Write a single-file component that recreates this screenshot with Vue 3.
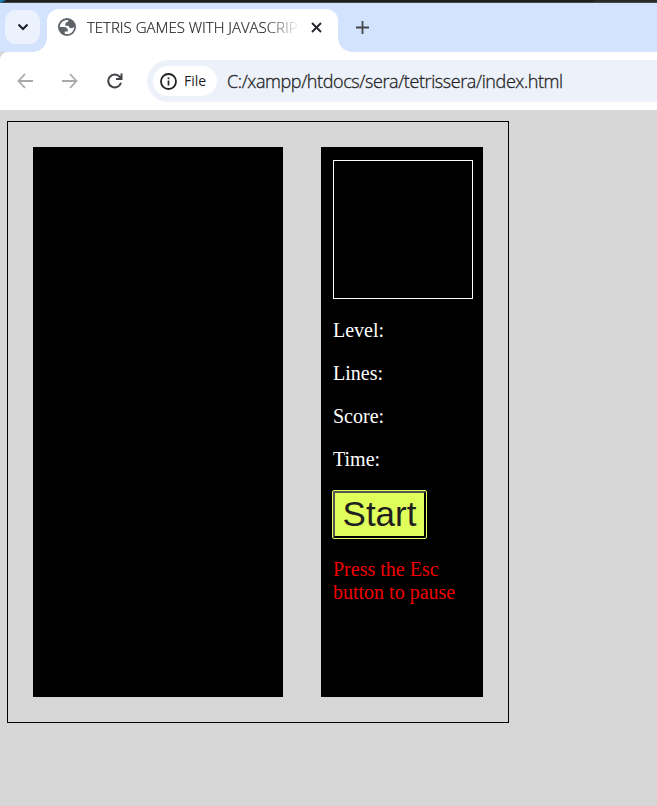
<script setup>
const stats = ['Level:', 'Lines:', 'Score:', 'Time:']
</script>

<template>
  <div class="window">
    <div class="desktop-edge"><svg width="657" height="3"><path d="M0 0h6L0 3z" fill="#187fb5" /><path d="M594 0h63v2h-64z" fill="#292929" /></svg></div>
    <header class="tabstrip">
      <button class="tab-search" aria-label="Search tabs">
        <svg width="12" height="8" viewBox="0 0 12 8"><path d="M1.500 1.500 6 6l4.500-4.500" fill="none" stroke="#1c1d20" stroke-width="2" /></svg>
      </button>
      <div class="tab">
        <svg class="globe" width="18" height="18" viewBox="2 2 20 20">
          <circle cx="12" cy="12" r="10" fill="#5f6368" />
          <path d="M4 12h4.400c3.407.022 4.922 1.730 4.543 5.127H9.488v2.470a8.004 8.004 0 0 0 10.498-8.080C19.327 12.672 18.333 13.250 17 13.250c-2.137 0-3.206-.916-3.206-2.750h-3.748c-.274-2.728.683-4.092 2.870-4.092 0-.975.327-1.597.811-1.970A8.004 8.004 0 0 0 4 12z" fill="#fff" />
        </svg>
        <span class="tab-title">TETRIS GAMES WITH JAVASCRIPT</span>
        <svg class="close" width="11" height="11" viewBox="0 0 11 11"><path d="m1 1 9 9m0-9-9 9" stroke="#25272b" stroke-width="1.900" /></svg>
      </div>
      <svg class="new-tab" width="13" height="13" viewBox="0 0 13 13"><path d="M6.500 0v13M0 6.500h13" stroke="#45474b" stroke-width="1.800" /></svg>
    </header>

    <nav class="toolbar">
      <svg class="back" width="16" height="16" viewBox="0 0 16 16"><path d="M8 1 1.500 8 8 15M1.500 8H16" fill="none" stroke="#a9a9a9" stroke-width="1.800" /></svg>
      <svg class="forward" width="16" height="16" viewBox="0 0 16 16"><path d="m8 1 6.500 7L8 15M14.500 8H0" fill="none" stroke="#a9a9a9" stroke-width="1.800" /></svg>
      <svg class="reload" width="16" height="16" viewBox="0 0 16 16"><path d="M14 9.800A6.500 6.500 0 1 1 12.800 3.800L14.500 5.500" fill="none" stroke="#414347" stroke-width="2" /><path d="M15.500.5v6.500H9V5h2.800l1.700-1.700V.5z" fill="#414347" /></svg>
      <div class="address">
        <div class="chip">
          <svg width="17" height="17" viewBox="0 0 17 17"><circle cx="8.500" cy="8.500" r="7.500" fill="none" stroke="#202124" stroke-width="1.800" /><path d="M8.500 7.500v5M8.500 4.400v1.800" stroke="#202124" stroke-width="1.700" /></svg>
          <span class="chip-label">File</span>
        </div>
        <span class="url">C:/xampp/htdocs/sera/tetrissera/index.html</span>
      </div>
    </nav>

    <main class="page">
      <div class="game">
        <div class="board"></div>
        <aside class="panel">
          <div class="preview"></div>
          <p v-for="label in stats" :key="label">{{ label }}</p>
          <button class="start">Start</button>
          <p class="hint">Press the Esc button to pause</p>
        </aside>
      </div>
    </main>
  </div>
</template>

<style>
body { margin: 0; overflow: hidden; }
</style>

<style scoped>
* { box-sizing: border-box; }
svg { display: block; flex: none; }
button { padding: 0; border: 0; }
.window {
  width: 657px;
  height: 806px;
  display: flex;
  flex-direction: column;
  background: #d7d7d7;
  overflow: hidden;
  font-family: "Open Sans", "Noto Sans", sans-serif;
}
.desktop-edge { height: 3px; flex: none; background: #1f1f1f; border-bottom: 1px solid #44474b; }
.desktop-edge svg { height: 3px; }
.tabstrip { height: 49px; flex: none; display: flex; background: #d3e3fd; }
.tab-search {
  width: 35px;
  height: 34px;
  margin: 7px 7px 0 5px;
  display: flex;
  align-items: center;
  justify-content: center;
  background: #ebf2fe;
  border-radius: 11px;
}
.tab {
  position: relative;
  width: 291px;
  height: 43px;
  margin-top: 6px;
  padding: 0 14px 7px 11px;
  display: flex;
  align-items: center;
  background: #fff;
  border-radius: 12px 12px 0 0;
}
.tab::before, .tab::after {
  content: "";
  position: absolute;
  bottom: 0;
  width: 14px;
  height: 14px;
}
.tab::before { left: -14px; background: radial-gradient(circle at 0 0, transparent 13.500px, #fff 14px); }
.tab::after { right: -14px; background: radial-gradient(circle at 100% 0, transparent 13.500px, #fff 14px); }
.tab-title {
  flex: none;
  width: 210px;
  margin: 0 14px 0 11px;
  overflow: hidden;
  white-space: nowrap;
  font-size: 15px;
  font-weight: 300;
  line-height: 22px;
  letter-spacing: -0.020px;
  color: #1f1f1f;
  -webkit-text-stroke: 0.200px #1f1f1f;
  -webkit-mask-image: linear-gradient(90deg, #000 178px, transparent 213px);
  mask-image: linear-gradient(90deg, #000 178px, transparent 213px);
}
.new-tab { margin: 18px 0 0 18px; }
.toolbar {
  height: 58px;
  flex: none;
  display: flex;
  align-items: center;
  padding-left: 17px;
  background: #fff;
  border-radius: 8px 0 0 0;
}
.forward { margin-left: 29px; }
.reload { margin-left: 29px; }
.address {
  flex: 1;
  height: 42px;
  margin-left: 24px;
  padding-left: 6px;
  display: flex;
  align-items: center;
  background: #ecf1fa;
  border-radius: 21px 0 0 21px;
}
.chip {
  width: 64px;
  height: 30px;
  padding-left: 7px;
  display: flex;
  align-items: center;
  gap: 7px;
  background: #fff;
  border-radius: 15px;
}
.chip-label { font-size: 14px; font-weight: 500; line-height: 20px; color: #1f1f1f; }
.url {
  margin-left: 10px;
  font-size: 18px;
  font-weight: 300;
  line-height: 26px;
  letter-spacing: -0.410px;
  white-space: nowrap;
  color: #1f1f1f;
  -webkit-text-stroke: 0.300px #1f1f1f;
}
.page { flex: 1; padding: 11px 0 0 7px; background: #d7d7d7; }
.game {
  width: 502px;
  height: 602px;
  padding: 25px;
  display: flex;
  justify-content: space-between;
  border: 1px solid #000;
}
.board { width: 250px; background: #000; }
.panel {
  width: 162px;
  padding: 13px 10px 0 12px;
  background: #000;
  color: #fff;
  font-family: "Liberation Serif", serif;
  font-size: 20px;
  line-height: 23px;
}
.preview { height: 139px; border: 1px solid #fff; }
.panel p { margin: 20px 0 0; }
.start {
  display: block;
  width: 93px;
  height: 47px;
  margin-top: 20px;
  padding-bottom: 2px;
  border: 2px solid;
  border-color: #555 #000 #000 #555;
  outline: 1px solid #e1ff5b;
  border-radius: 1px;
  background: #e1ff5b;
  color: #1f1f1f;
  font: 35px/39px "Liberation Sans", sans-serif;
}
.panel .hint { color: #f00000; }
</style>
